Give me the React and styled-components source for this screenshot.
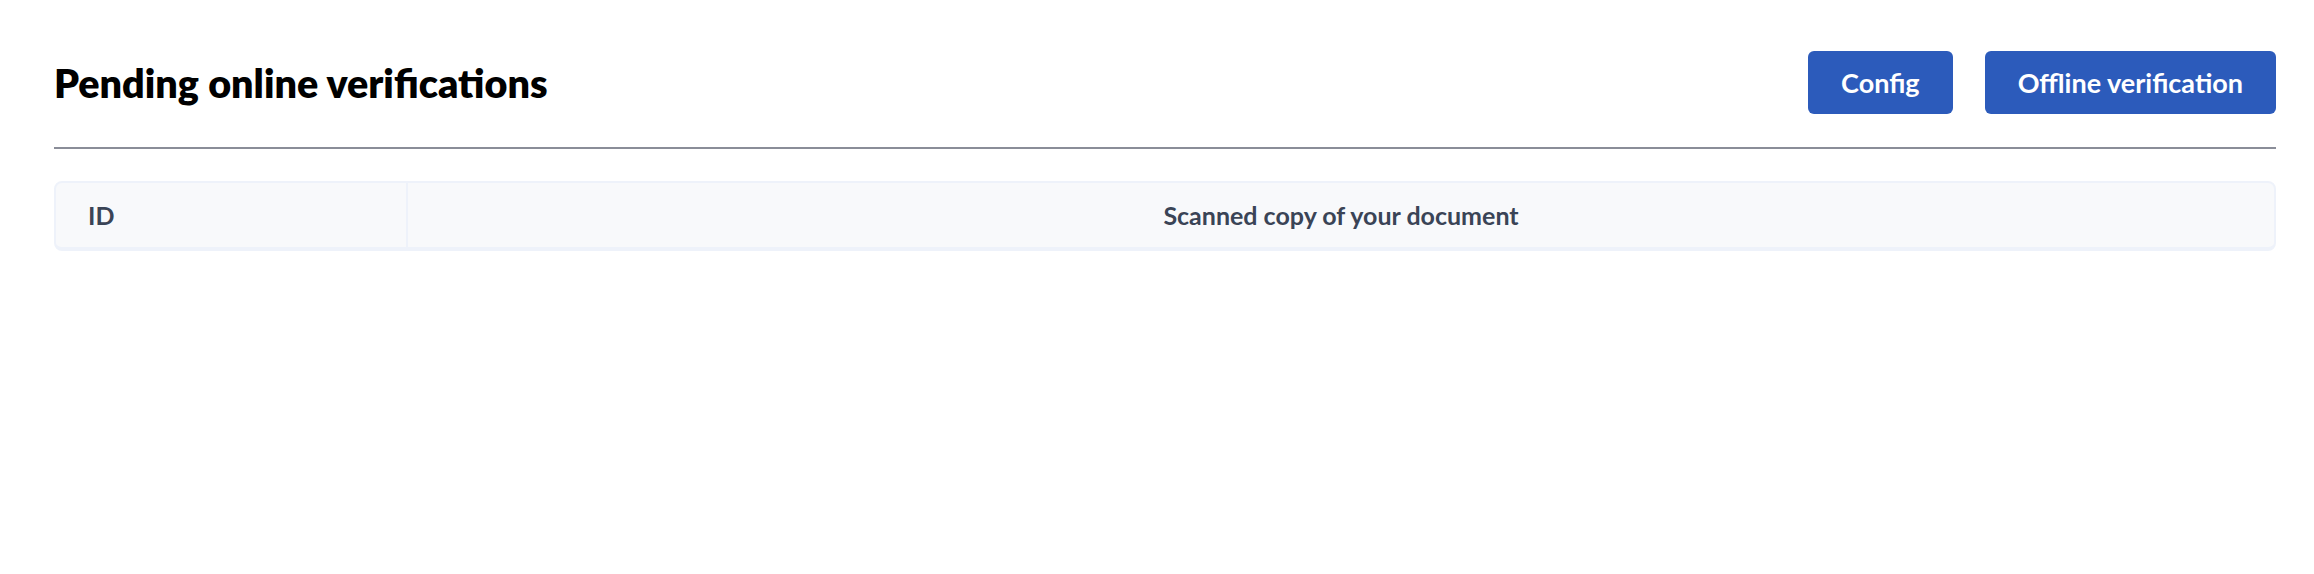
import React from "react";
import styled, { createGlobalStyle } from "styled-components";

const Global = createGlobalStyle`
  html, body { margin: 0; padding: 0; background: #ffffff; }
  body { font-family: "Lato", "Open Sans", sans-serif; }
`;

const Page = styled.div`
  padding: 51px 38px 0 54px;
`;

const Header = styled.header`
  display: flex;
  align-items: center;
  justify-content: space-between;
  padding-bottom: 33px;
  border-bottom: 2px solid #8a8d98;
`;

const Title = styled.h1`
  margin: 0;
  font-family: "Lato", sans-serif;
  font-weight: 800;
  font-size: 39.5px;
  line-height: 1.2;
  color: #000000;
`;

const Actions = styled.div`
  display: flex;
  gap: 32px;
`;

const Button = styled.button`
  height: 63px;
  padding: 0 33px;
  border: none;
  border-radius: 6px;
  background: #2c5bbb;
  color: #ffffff;
  font-family: "Lato", sans-serif;
  font-weight: 700;
  font-size: 27px;
  cursor: pointer;
`;

const Table = styled.div`
  margin-top: 32px;
  display: grid;
  grid-template-columns: 350px 1fr;
  height: 64px;
  background: #f8f9fb;
  border: 2px solid #eef2fa;
  border-bottom-width: 4px;
  border-radius: 8px;
`;

const HeadCell = styled.div`
  display: flex;
  align-items: center;
  justify-content: ${(p) => (p.$center ? "center" : "flex-start")};
  padding: 0 32px;
  font-family: "Lato", sans-serif;
  font-weight: 700;
  font-size: 25px;
  color: #3a4456;
  border-left: ${(p) => (p.$divider ? "2px solid #eef2fa" : "none")};
`;

export default function App() {
  return (
    <>
      <Global />
      <Page>
        <Header>
          <Title>Pending online verifications</Title>
          <Actions>
            <Button>Config</Button>
            <Button>Offline verification</Button>
          </Actions>
        </Header>
        <Table>
          <HeadCell>ID</HeadCell>
          <HeadCell $center $divider>
            Scanned copy of your document
          </HeadCell>
        </Table>
      </Page>
    </>
  );
}
